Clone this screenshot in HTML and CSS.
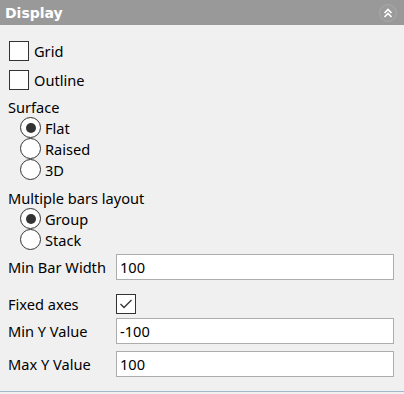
FILE: index.html
```html
<!DOCTYPE html>
<html lang="en">
<head>
    <meta charset="UTF-8">
    <title>Display</title>
    <link rel="stylesheet" href="styles.css">
</head>
<body>
    <div class="panel">
        <div class="panel-header">
            <span class="panel-title">Display</span>
            <button class="collapse-btn" title="Collapse">
                <svg width="10" height="10" viewBox="0 0 10 10">
                    <path d="M1.5 5 L5 1.5 L8.5 5 M1.5 9 L5 5.5 L8.5 9" fill="none" stroke="#fff" stroke-width="1.6"/>
                </svg>
            </button>
        </div>

        <div class="panel-body">
            <label class="check-row"><span class="box"></span>Grid</label>
            <label class="check-row"><span class="box"></span>Outline</label>

            <div class="group">
                <div class="group-title">Surface</div>
                <label class="radio-row"><span class="dot checked"></span>Flat</label>
                <label class="radio-row"><span class="dot"></span>Raised</label>
                <label class="radio-row"><span class="dot"></span>3D</label>
            </div>

            <div class="group">
                <div class="group-title">Multiple bars layout</div>
                <label class="radio-row"><span class="dot checked"></span>Group</label>
                <label class="radio-row"><span class="dot"></span>Stack</label>
            </div>

            <div class="field first">
                <span class="field-label">Min Bar Width</span>
                <div class="text-input">100</div>
            </div>
            <div class="field check-field">
                <span class="field-label">Fixed axes</span>
                <span class="box">
                    <svg width="14" height="12" viewBox="0 0 14 12">
                        <path d="M1.5 6 L5 9.5 L12.5 2" fill="none" stroke="#333" stroke-width="1.3"/>
                    </svg>
                </span>
            </div>
            <div class="field">
                <span class="field-label">Min Y Value</span>
                <div class="text-input">-100</div>
            </div>
            <div class="field">
                <span class="field-label">Max Y Value</span>
                <div class="text-input">100</div>
            </div>
        </div>
    </div>
</body>
</html>
```

FILE: styles.css
```css
body {
    margin: 0;
    background: #f0f0f0;
    font-family: "Noto Sans", "Liberation Sans", sans-serif;
    font-size: 14.6px;
    color: #000;
}
.panel {
    width: 404px;
    height: 392px;
    border-bottom: 1px solid #a3b7cc;
    box-sizing: border-box;
    display: flex;
    flex-direction: column;
}
.panel-header {
    height: 25px;
    background: #999999;
    display: flex;
    align-items: center;
    justify-content: space-between;
    padding: 0 7px 0 5px;
}
.panel-title {
    font-family: "DejaVu Sans", sans-serif;
    font-weight: bold;
    font-size: 14px;
    color: #fff;
}
.collapse-btn {
    width: 18px;
    height: 18px;
    border-radius: 50%;
    border: 1px solid #a9a9a9;
    background: #9b9b9b;
    padding: 0;
    display: flex;
    align-items: center;
    justify-content: center;
}
.panel-body {
    padding: 11px 10px 0 8px;
}
.check-row {
    height: 29px;
    display: flex;
    align-items: center;
    gap: 5px;
    padding-left: 1px;
}
.box {
    width: 18px;
    height: 18px;
    border: 1px solid #333;
    background: #fff;
    display: flex;
    align-items: center;
    justify-content: center;
}
.group {
    margin-top: 3px;
}
.group + .group {
    margin-top: 8px;
}
.group-title {
    height: 20px;
    line-height: 20px;
}
.radio-row {
    height: 21px;
    display: flex;
    align-items: center;
    gap: 4px;
    padding-left: 12px;
}
.dot {
    width: 19px;
    height: 19px;
    border: 1px solid #333;
    border-radius: 50%;
    background: #fff;
    position: relative;
}
.dot.checked::after {
    content: "";
    position: absolute;
    left: 4.5px;
    top: 4.5px;
    width: 10px;
    height: 10px;
    border-radius: 50%;
    background: #333;
}
.field {
    display: flex;
    align-items: center;
    height: 26px;
    margin-bottom: 7px;
}
.field.first {
    margin-top: 4px;
}
.field.check-field {
    height: 29px;
    margin-bottom: 0;
    padding-top: 2px;
}
.field-label {
    width: 108px;
    flex: none;
}
.text-input {
    flex: 1;
    height: 26px;
    box-sizing: border-box;
    border: 1px solid #adadad;
    background: #fff;
    padding: 0 3px;
    line-height: 24px;
}
```
